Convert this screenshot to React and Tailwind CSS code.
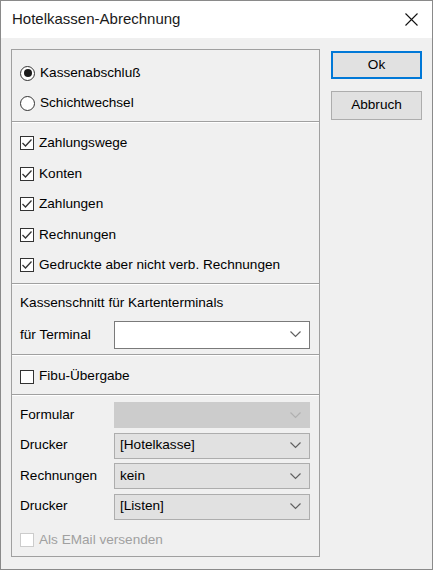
import React from "react";

const font = { fontFamily: '"Liberation Sans", Arial, sans-serif' };

function Chevron({ color = "#606060" }) {
  return (
    <svg width="11" height="7" viewBox="0 0 11 7" className="mr-[8px]">
      <path d="M0.5 0.5 L5.5 5.5 L10.5 0.5" fill="none" stroke={color} strokeWidth="1.2" />
    </svg>
  );
}

function Radio({ checked, label }) {
  return (
    <div className="flex items-center h-[30px]">
      <span className="w-[15px] h-[15px] rounded-full border border-[#333] bg-white flex items-center justify-center">
        {checked && <span className="w-[8px] h-[8px] rounded-full bg-[#1a1a1a]" />}
      </span>
      <span className="ml-[5px]">{label}</span>
    </div>
  );
}

function Check({ checked, label, disabled, h = "h-[30.5px]" }) {
  return (
    <div className={`flex items-center ${h}`}>
      <span
        className={`w-[14px] h-[14px] border bg-white flex items-center justify-center ${
          disabled ? "border-[#cccccc]" : "border-[#333]"
        }`}
      >
        {checked && (
          <svg width="12" height="12" viewBox="0 0 12 12">
            <path d="M1.5 6 L4.5 9 L10.5 2.5" fill="none" stroke="#333" strokeWidth="1.3" />
          </svg>
        )}
      </span>
      <span className={`ml-[5px] ${disabled ? "text-[#a0a0a0]" : ""}`}>{label}</span>
    </div>
  );
}

function Select({ value, variant = "button", h = "h-[26px]" }) {
  const cls =
    variant === "white"
      ? "bg-white border-[#7a7a7a]"
      : variant === "disabled"
      ? "bg-[#cccccc] border-[#cccccc]"
      : "bg-[#e1e1e1] border-[#adadad]";
  return (
    <div className={`w-[196px] ${h} border ${cls} flex items-center justify-between pl-[5px]`}>
      <span>{value}</span>
      <Chevron color={variant === "disabled" ? "#b0b0b0" : "#606060"} />
    </div>
  );
}

function Sep() {
  return (
    <div>
      <div className="h-px bg-[#a0a0a0]" />
      <div className="h-px bg-white" />
    </div>
  );
}

export default function App() {
  return (
    <div
      style={font}
      className="w-[433px] h-[570px] border border-[#8a8a8a] bg-[#f0f0f0] text-[13.6px] text-black flex flex-col"
    >
      <div className="h-[37px] bg-white flex items-center justify-between pl-[11px] pr-[14px]">
        <span className="text-[15px] text-[#1a1a1a]">Hotelkassen-Abrechnung</span>
        <svg width="13" height="13" viewBox="0 0 13 13">
          <path d="M0.5 0.5 L12.5 12.5 M12.5 0.5 L0.5 12.5" stroke="#111" strokeWidth="1.1" />
        </svg>
      </div>

      <div className="flex pl-[10px] pt-[11px]">
        <div className="w-[309px] h-[508px] border border-[#a0a0a0] flex flex-col">
          <div className="h-[72px] pl-[8px] pt-[8px]">
            <Radio checked label="Kassenabschluß" />
            <Radio label="Schichtwechsel" />
          </div>
          <Sep />
          <div className="h-[162px] pl-[8px] pt-[5px]">
            <Check checked label="Zahlungswege" />
            <Check checked label="Konten" />
            <Check checked label="Zahlungen" />
            <Check checked label="Rechnungen" />
            <Check checked label="Gedruckte aber nicht verb. Rechnungen" />
          </div>
          <Sep />
          <div className="h-[70px] pl-[8px] pt-[6px]">
            <div className="h-[24px] flex items-center">Kassenschnitt für Kartenterminals</div>
            <div className="flex items-center mt-[6px]">
              <span className="w-[94px]">für Terminal</span>
              <Select value="" variant="white" h="h-[28px]" />
            </div>
          </div>
          <Sep />
          <div className="h-[38px] pl-[8px] pt-[3px]">
            <Check label="Fibu-Übergabe" h="h-[35px]" />
          </div>
          <Sep />
          <div className="flex-1 pl-[8px] pt-[6px] flex flex-col gap-[4.5px]">
            <div className="flex items-center">
              <span className="w-[94px]">Formular</span>
              <Select value="" variant="disabled" />
            </div>
            <div className="flex items-center">
              <span className="w-[94px]">Drucker</span>
              <Select value="[Hotelkasse]" />
            </div>
            <div className="flex items-center">
              <span className="w-[94px]">Rechnungen</span>
              <Select value="kein" />
            </div>
            <div className="flex items-center">
              <span className="w-[94px]">Drucker</span>
              <Select value="[Listen]" />
            </div>
            <Check disabled label="Als EMail versenden" h="h-[32px]" />
          </div>
        </div>

        <div className="ml-[11px] pt-[2px] flex flex-col gap-[12px]">
          <div className="w-[91px] h-[28px] border-2 border-[#0078d7] bg-[#e1e1e1] flex items-center justify-center">
            Ok
          </div>
          <div className="w-[91px] h-[29px] border border-[#adadad] bg-[#e1e1e1] flex items-center justify-center">
            Abbruch
          </div>
        </div>
      </div>
    </div>
  );
}
